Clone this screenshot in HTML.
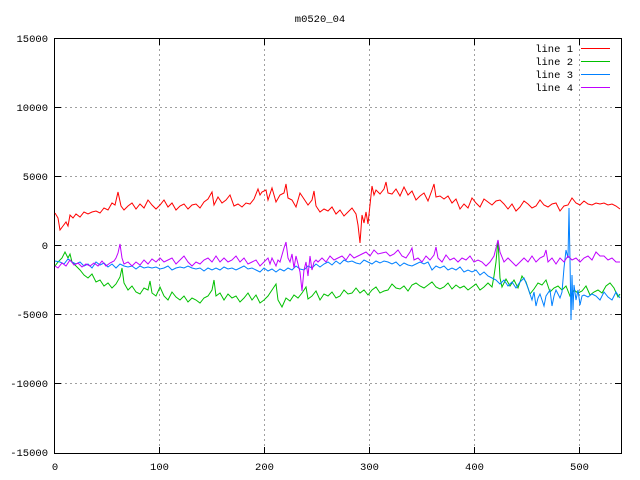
<!DOCTYPE html>
<html><head><style>body{margin:0;background:#fff}svg{display:block}text{font-family:"Liberation Mono","DejaVu Sans Mono",monospace;font-size:10.5px;fill:#000}</style></head><body>
<svg width="640" height="480" xmlns="http://www.w3.org/2000/svg">
<rect width="640" height="480" fill="#fff"/>
<g stroke="#a0a0a0" stroke-width="1" stroke-dasharray="2,3" fill="none">
<path d="M159.5 39V453M264.5 39V453M369.5 39V453M474.5 39V453M579.5 39V453"/>
<path d="M55 107.5H621M55 176.5H621M55 245.5H621M55 314.5H621M55 383.5H621"/>
</g>
<g stroke="#000" stroke-width="1" fill="none">
<rect x="54.5" y="38.5" width="567" height="415"/>
<path d="M55 107.5h6M55 176.5h6M55 245.5h6M55 314.5h6M55 383.5h6M621 107.5h-6M621 176.5h-6M621 245.5h-6M621 314.5h-6M621 383.5h-6"/>
<path d="M159.5 453v-6M264.5 453v-6M369.5 453v-6M474.5 453v-6M579.5 453v-6M159.5 39v6M264.5 39v6M369.5 39v6M474.5 39v6M579.5 39v6"/>
</g>
<g text-anchor="end">
<text x="48" y="42">15000</text><text x="48" y="111">10000</text><text x="48" y="180">5000</text><text x="48" y="249">0</text><text x="48" y="318">-5000</text><text x="48" y="387">-10000</text><text x="48" y="456">-15000</text>
</g>
<g text-anchor="middle">
<text x="55" y="470">0</text><text x="159.5" y="470">100</text><text x="264.5" y="470">200</text><text x="369.5" y="470">300</text><text x="474.5" y="470">400</text><text x="579.5" y="470">500</text>
<text x="320" y="22">m0520_04</text>
</g>
<g text-anchor="end">
<text x="573" y="52">line 1</text><text x="573" y="65">line 2</text><text x="573" y="78">line 3</text><text x="573" y="91">line 4</text>
</g>
<g stroke-width="1" fill="none">
<path d="M581 48.5h29" stroke="#ff0000"/><path d="M581 61.5h29" stroke="#00c000"/><path d="M581 74.5h29" stroke="#0080ff"/><path d="M581 87.5h29" stroke="#c000ff"/>
<polyline stroke="#ff0000" points="55,213 58,218 60,230 63,226 66,222 68,226 70,215 73,218 76,214 80,217 84,212 88,214 92,212 96,211 100,213 104,208 108,210 112,203 115,205 118,192 121,206 124,210 128,206 132,203 136,209 140,204 144,208 148,200 152,205 156,209 160,205 164,200 168,207 172,203 176,210 180,206 184,204 188,209 192,205 196,204 200,208 204,202 208,199 212,192 214,205 218,197 222,203 226,200 230,195 234,206 238,204 242,207 246,203 250,204 254,199 258,189 260,195 262,192 266,190 268,200 272,188 276,202 280,195 284,193 286,184 288,198 292,200 296,207 300,193 304,199 308,205 312,200 314,191 316,206 320,212 324,209 328,211 332,207 336,214 340,210 344,216 348,212 352,208 356,214 358,225 360,243 362,215 364,223 366,212 368,224 370,205 372,186 374,195 376,190 380,194 384,189 386,182 388,193 392,194 396,189 400,196 404,187 408,195 412,191 416,200 420,196 424,193 428,201 432,190 434,184 436,197 440,196 444,199 448,196 452,203 456,199 460,209 464,204 468,208 472,198 476,203 480,207 484,199 488,202 492,205 496,201 500,200 504,204 508,209 512,204 516,211 520,207 524,201 528,204 532,208 536,206 540,200 544,205 548,207 552,204 556,203 560,211 564,206 568,205 572,198 576,203 580,205 584,201 588,204 592,205 596,203 600,204 604,203 608,205 612,204 616,206 620,209"/>
<polyline stroke="#00c000" points="55,266 58,262 62,258 65,252 68,258 70,254 72,262 76,266 80,270 84,275 88,278 92,274 96,282 100,280 104,286 108,283 112,288 116,284 120,277 122,268 124,283 128,290 132,286 136,292 140,294 144,288 148,290 150,281 152,293 156,296 160,287 164,296 168,300 172,292 176,297 180,300 184,296 188,302 192,298 196,300 200,303 204,298 208,296 212,290 214,280 216,296 220,293 224,300 228,294 232,298 236,296 240,302 244,298 248,293 252,300 256,295 260,303 264,300 268,296 272,290 276,284 278,300 282,307 286,298 290,301 294,295 298,298 302,293 306,287 308,299 312,296 316,291 320,300 324,294 328,296 332,292 336,298 340,296 344,290 348,294 352,293 356,288 360,293 364,290 368,295 372,290 376,287 380,293 384,291 388,290 392,284 396,288 400,289 404,286 408,291 412,285 416,283 420,286 424,288 428,285 432,282 436,287 440,289 444,287 448,283 452,289 456,285 460,288 464,286 468,290 472,287 476,284 480,290 484,287 488,283 492,287 494,276 496,262 498,240 500,278 502,287 506,279 510,286 514,280 518,288 522,276 526,282 530,294 534,289 538,283 542,285 546,280 550,292 554,288 558,286 562,290 566,286 570,296 574,290 578,293 582,291 586,286 590,295 594,292 598,290 602,293 606,286 610,283 614,288 618,297 620,294"/>
<polyline stroke="#0080ff" points="55,261 60,262 64,264 68,259 72,262 76,264 80,262 84,266 88,264 92,268 96,262 100,265 104,263 108,267 112,264 116,268 120,264 124,266 128,267 132,266 136,269 140,266 144,268 148,267 152,268 156,267 160,269 164,268 168,266 172,270 176,268 180,267 184,268 188,266 192,268 196,269 200,268 204,271 208,268 212,270 216,268 220,270 224,267 228,269 232,268 236,270 240,268 244,266 248,269 252,268 256,270 260,272 264,268 268,271 272,269 276,272 280,269 284,271 288,268 292,270 296,266 300,269 304,270 308,266 312,268 316,264 320,267 324,264 328,262 332,265 336,261 340,264 344,260 348,262 352,261 356,263 360,264 364,260 368,262 372,264 376,261 380,263 384,261 388,262 392,264 396,262 400,266 404,263 408,265 412,266 416,264 420,262 424,264 428,262 432,270 436,266 440,268 444,266 448,270 452,268 456,270 460,267 464,272 468,270 472,272 476,270 480,275 484,272 488,276 492,278 496,280 500,284 504,280 508,286 512,282 516,288 520,282 524,278 528,288 532,300 534,292 536,306 538,298 540,294 542,300 544,306 546,296 550,290 552,306 554,296 556,290 560,298 562,292 564,268 566,250 568,258 569,208 570,260 571,320 572,275 573,310 574,285 576,300 578,290 580,305 582,296 584,295 588,297 592,294 596,296 600,300 604,292 608,297 612,300 616,292 620,298"/>
<polyline stroke="#c000ff" points="55,266 58,268 62,263 66,266 70,260 74,265 78,263 82,267 86,264 90,266 94,263 98,266 102,261 106,266 110,263 114,261 116,258 118,253 120,244 122,258 124,264 128,262 132,266 136,262 140,265 144,260 148,264 152,259 156,262 160,258 164,262 168,260 172,258 176,264 180,260 184,256 188,262 192,266 196,262 200,264 204,260 208,258 212,262 216,256 220,262 224,258 228,262 232,260 236,256 240,262 244,258 248,264 252,262 256,260 260,266 264,262 268,258 270,264 272,258 276,266 278,260 280,262 284,248 286,242 288,258 290,262 292,254 294,268 296,256 298,264 300,272 302,291 304,270 306,262 308,276 310,256 312,270 314,262 316,260 318,262 322,258 326,262 330,256 334,260 338,258 342,256 346,260 350,254 354,258 358,256 362,254 366,252 370,256 374,250 378,254 382,253 386,252 390,256 394,254 398,250 402,256 406,258 410,252 412,248 414,260 418,258 422,262 426,256 430,260 434,255 436,247 438,258 442,262 446,255 450,260 454,258 458,262 462,258 466,260 470,256 474,262 478,260 482,262 486,266 490,262 494,256 496,248 498,240 500,252 504,262 508,258 512,262 516,266 520,262 524,258 528,262 532,256 536,262 540,258 544,256 546,250 548,262 552,258 556,264 560,258 564,262 568,256 572,260 576,258 580,262 584,258 588,256 592,260 596,252 600,256 604,256 608,260 612,258 616,262 620,262"/>
</g>
</svg>
</body></html>
